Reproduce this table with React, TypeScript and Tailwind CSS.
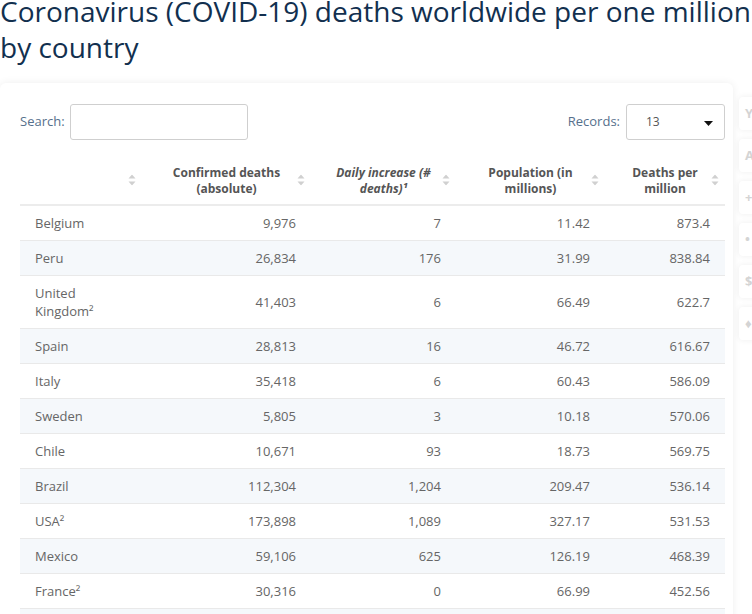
import React from "react";

const rows: [React.ReactNode, string, string, string, string][] = [
  ["Belgium", "9,976", "7", "11.42", "873.4"],
  ["Peru", "26,834", "176", "31.99", "838.84"],
  ["United Kingdom²", "41,403", "6", "66.49", "622.7"],
  ["Spain", "28,813", "16", "46.72", "616.67"],
  ["Italy", "35,418", "6", "60.43", "586.09"],
  ["Sweden", "5,805", "3", "10.18", "570.06"],
  ["Chile", "10,671", "93", "18.73", "569.75"],
  ["Brazil", "112,304", "1,204", "209.47", "536.14"],
  ["USA²", "173,898", "1,089", "327.17", "531.53"],
  ["Mexico", "59,106", "625", "126.19", "468.39"],
  ["France²", "30,316", "0", "66.99", "452.56"],
  ["Ecuador", "6,333", "12", "17.08", "370.79"],
  ["Bolivia", "4,474", "84", "11.35", "394.18"],
];

function SortIcon() {
  return (
    <svg
      className="absolute right-[6px] top-1/2 -translate-y-1/2"
      width="8"
      height="11"
      viewBox="0 0 8 11"
    >
      <path d="M4 0 L7.5 4 L0.5 4 Z" fill="#d0d0d0" />
      <path d="M4 11 L7.5 7 L0.5 7 Z" fill="#d0d0d0" />
    </svg>
  );
}

function Th({ children, italic }: { children?: React.ReactNode; italic?: boolean }) {
  return (
    <th
      className={`relative px-[15px] pt-[10px] pb-[7px] text-center align-middle text-[12px] font-bold leading-[16px] text-[#555] border-b-2 border-[#ececec] ${
        italic ? "italic" : ""
      }`}
    >
      {children}
      <SortIcon />
    </th>
  );
}

export default function App() {
  return (
    <div
      className="w-[752px] h-[614px] overflow-hidden bg-white"
      style={{ fontFamily: '"Open Sans", sans-serif' }}
    >
      <h1 className="mt-[-7px] text-[28px] leading-[36px] font-normal text-[#12304f] whitespace-nowrap">
        Coronavirus (COVID-19) deaths worldwide per one million
        <br />
        by country
      </h1>
      <div className="mt-[18px] flex gap-[6px]">
        <div className="w-[733px] shrink-0 rounded-md bg-white shadow-[0_0_8px_rgba(0,0,0,0.07)] pl-[20px] pr-[8px] pt-[21px] pb-[20px]">
          <div className="flex items-center justify-between w-[705px]">
            <div className="flex items-center gap-[5px]">
              <span className="text-[13px] text-[#56708c]">Search:</span>
              <div className="w-[178px] h-[36px] rounded-[3px] border border-[#cfcfcf] bg-white" />
            </div>
            <div className="flex items-center gap-[6px]">
              <span className="text-[13px] text-[#56708c]">Records:</span>
              <div className="relative w-[99px] h-[36px] rounded-[3px] border border-[#cfcfcf] bg-white flex items-center pl-[19px]">
                <span className="text-[12px] text-[#555]">13</span>
                <svg className="absolute right-[11px] top-[16px]" width="9" height="5" viewBox="0 0 9 5">
                  <path d="M0 0 L9 0 L4.5 5 Z" fill="#111" />
                </svg>
              </div>
            </div>
          </div>
          <table className="mt-[15px] w-[705px] table-fixed border-collapse">
            <colgroup>
              <col className="w-[122px]" />
              <col className="w-[169px]" />
              <col className="w-[145px]" />
              <col className="w-[149px]" />
              <col className="w-[120px]" />
            </colgroup>
            <thead>
              <tr>
                <Th />
                <Th>Confirmed deaths (absolute)</Th>
                <Th italic>Daily increase (# deaths)¹</Th>
                <Th>Population (in millions)</Th>
                <Th>Deaths per million</Th>
              </tr>
            </thead>
            <tbody>
              {rows.map((r, i) => (
                <tr key={i} className={i % 2 === 1 ? "bg-[#f5f8fb]" : "bg-white"}>
                  <td className="px-[15px] py-[8px] text-[13px] leading-[18px] text-[#666] border-b border-[#e9e9e9] text-left">
                    {r[0]}
                  </td>
                  {r.slice(1).map((c, j) => (
                    <td
                      key={j}
                      className="px-[15px] py-[8px] text-[13px] leading-[18px] text-[#666] border-b border-[#e9e9e9] text-right"
                    >
                      {c}
                    </td>
                  ))}
                </tr>
              ))}
            </tbody>
          </table>
        </div>
        <div className="flex flex-col gap-[9px] pt-[14px] shrink-0">
          {["Y", "A", "+", "•", "$", "♦"].map((g, i) => (
            <div
              key={i}
              className="w-[36px] h-[33px] rounded-[4px] bg-white shadow-[0_0_6px_rgba(0,0,0,0.07)] flex items-center pl-[6px]"
            >
              <span className="text-[13px] font-bold text-[#d4d4d4]">{g}</span>
            </div>
          ))}
        </div>
      </div>
    </div>
  );
}
